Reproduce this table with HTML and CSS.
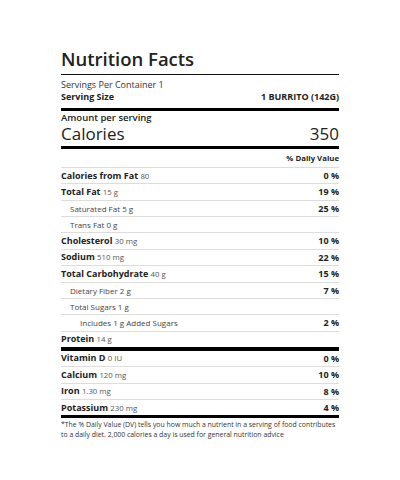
FILE: index.html
```html
<!DOCTYPE html>
<html lang="en">
  <head>
    <meta charset="UTF-8" />
    <meta name="viewport" content="width=device-width, initial-scale=1.0" />
    <title>Nutrition Facts</title>
    <link rel="stylesheet" href="styles.css">
  </head>
  <body>
    <div class="label">
      <h1 class="title">Nutrition Facts</h1>
      <div class="servings">
        <p>Servings Per Container 1</p>
        <div class="size">
          <span>Serving Size</span>
          <span>1 BURRITO (142G)</span>
        </div>
      </div>
      <div class="calories">
        <p>Amount per serving</p>
        <div class="cal-row">
          <span>Calories</span>
          <span>350</span>
        </div>
      </div>
      <div class="dv-head">% Daily Value</div>
      <ul class="rows" type="none">
        <li><span><b>Calories from Fat</b> <small>80</small></span><b>0 %</b></li>
        <li><span><b>Total Fat</b> <small>15 g</small></span><b>19 %</b></li>
        <li class="sub"><span>Saturated Fat 5 g</span><b>25 %</b></li>
        <li class="sub"><span>Trans Fat 0 g</span></li>
        <li><span><b>Cholesterol</b> <small>30 mg</small></span><b>10 %</b></li>
        <li><span><b>Sodium</b> <small>510 mg</small></span><b>22 %</b></li>
        <li><span><b>Total Carbohydrate</b> <small>40 g</small></span><b>15 %</b></li>
        <li class="sub"><span>Dietary Fiber 2 g</span><b>7 %</b></li>
        <li class="sub"><span>Total Sugars 1 g</span></li>
        <li class="sub sub2"><span>Includes 1 g Added Sugars</span><b>2 %</b></li>
        <li><span><b>Protein</b> <small>14 g</small></span></li>
      </ul>
      <ul class="rows minerals" type="none">
        <li><span><b>Vitamin D</b> <small>0 IU</small></span><b>0 %</b></li>
        <li><span><b>Calcium</b> <small>120 mg</small></span><b>10 %</b></li>
        <li><span><b>Iron</b> <small>1.30 mg</small></span><b>8 %</b></li>
        <li><span><b>Potassium</b> <small>230 mg</small></span><b>4 %</b></li>
      </ul>
      <p class="note">*The % Daily Value (DV) tells you how much a nutrient in a serving of food contributes to a daily diet. 2,000 calories a day is used for general nutrition advice</p>
    </div>
  </body>
</html>
```

FILE: styles.css
```css
* {
  margin: 0;
  padding: 0;
  box-sizing: border-box;
}
body {
  font-family: "Open Sans", "DejaVu Sans", sans-serif;
  color: #222;
  background-color: #fff;
  padding-top: 47px;
}
.label {
  width: 278px;
  margin: 0 auto;
}
.title {
  font-size: 18.5px;
  font-weight: 600;
  line-height: 24px;
  padding-bottom: 3px;
  border-bottom: 1px solid #111;
}
.servings {
  padding-top: 3px;
  font-size: 9px;
  border-bottom: 3px solid #000;
}
.servings p {
  line-height: 13px;
  color: #333;
}
.size {
  display: flex;
  justify-content: space-between;
  font-weight: 700;
  line-height: 12px;
  padding-bottom: 5px;
}
.calories {
  padding-top: 1px;
  border-bottom: 3px solid #000;
}
.calories p {
  font-size: 9.5px;
  font-weight: 600;
  line-height: 12px;
}
.cal-row {
  display: flex;
  justify-content: space-between;
  font-size: 17px;
  line-height: 20px;
  padding-bottom: 2px;
}
.dv-head {
  text-align: right;
  font-size: 7.8px;
  font-weight: 700;
  line-height: 18px;
}
.rows li {
  display: flex;
  justify-content: space-between;
  align-items: center;
  height: 16.36px;
  border-top: 1px solid #ddd;
  font-size: 9px;
  line-height: 15.36px;
}
.rows li small {
  font-size: 7.8px;
  color: #555;
}
.rows li b {
  font-weight: 700;
}
.rows li.sub span {
  padding-left: 9px;
  font-size: 8px;
  color: #444;
}
.rows li.sub2 span {
  padding-left: 19px;
}
.minerals {
  border-top: 4px solid #000;
  border-bottom: 3px solid #000;
}
.minerals li:first-child {
  height: 15.36px;
  border-top: none;
}
.note {
  font-size: 6.9px;
  line-height: 10px;
  color: #333;
  padding-top: 2px;
}
```
